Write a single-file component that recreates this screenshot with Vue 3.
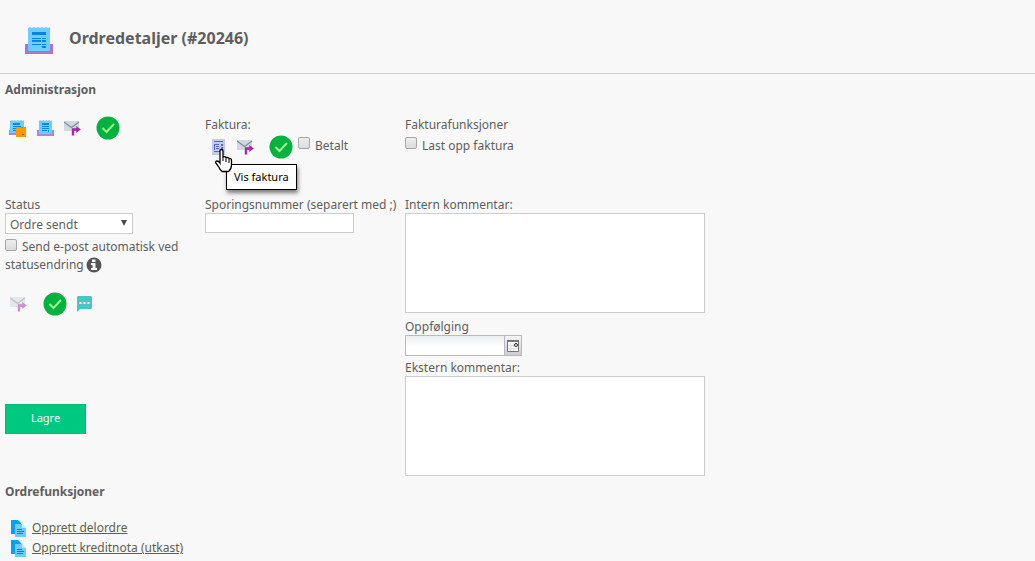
<script setup>
import { ref } from 'vue'

const status = ref('Ordre sendt')
const paid = ref(false)
const upload = ref(false)
const autoMail = ref(false)
const tracking = ref('')
const internal = ref('')
const external = ref('')
const followUp = ref('')
const links = ['Opprett delordre', 'Opprett kreditnota (utkast)']
</script>

<template>
  <svg class="sprite" aria-hidden="true">
    <symbol id="receipt" viewBox="0 0 28 28">
      <path d="M0 18h28v10H0z" fill="#a577d2" />
      <path d="M3 18h22v7H3z" fill="#8b5fc0" />
      <path d="M3 2l2-1 2 1 2-1 2 1 2-1 2 1 2-1 2 1 2-1 2 1 2-1v24H3z" fill="#70cbff" />
      <path d="M7 6h14v3H7zM7 12h9v1H7zM7 14h9v2H7zM7 18h9v1H7zM17 12h4v1h-4zM17 14h4v2h-4zM17 18h4v1h-4zM17 20h4v2h-4z" fill="#0883d9" />
    </symbol>
    <symbol id="receipt-small" viewBox="0 0 17 17">
      <path d="M0 10h17v6H0z" fill="#ac87d5" />
      <path d="M2 1l1-1 2 1 1-1 2 1 1-1 2 1 1-1 2 1 1-1v14H2z" fill="#70cbff" />
      <path d="M5 3h7v2H5zM5 6h7v1H5zM5 8h7v1H5zM5 10h5v1H5zM11 10h1v2h-1z" fill="#078be2" />
    </symbol>
    <symbol id="packing" viewBox="0 0 17 17">
      <path d="M0 10h17v5H0z" fill="#ac87d5" />
      <path d="M1 1l2-1 1 1 2-1 1 1 2-1 1 1 2-1 2 1 1-1v13H1z" fill="#70cbff" />
      <path d="M4 3h7v2H4zM4 6h8v1H4zM4 8h4v1H4zM4 10h3v1H4z" fill="#078be2" />
      <path d="M7 7h10v10H7z" fill="#ff9800" />
      <path d="M11 7h3v1h-3z" fill="#ef7d00" />
      <path d="M13 14h2v1h-2z" fill="#a65000" />
    </symbol>
    <symbol id="mail" viewBox="0 0 17 15">
      <path d="M0 0h15v10H0z" fill="#cfd8dc" />
      <path d="M0 1l7.500 5.500L15 1" fill="none" stroke="#78909c" stroke-width="1.200" />
      <path d="M9 14.500V8.500h4" fill="none" stroke="#ab22ad" stroke-width="2.400" />
      <path d="M12.300 5l4.500 3.500-4.500 3.500z" fill="#ab22ad" />
    </symbol>
    <symbol id="check" viewBox="0 0 24 24">
      <circle cx="12" cy="12" r="11.500" fill="#00b341" />
      <path d="M6.500 12l4 4 7.500-8" fill="none" stroke="#a6f58b" stroke-width="2" />
    </symbol>
    <symbol id="invoice" viewBox="0 0 13 16">
      <path d="M0 0h13v16H0z" fill="#c1c9ed" />
      <path d="M2 2h9v1H2zM2 5h5v1H2zM2 6h1v5H2zM4 7h3v1H4zM4 9h3v1H4zM2 12h6v1H2zM9 5h2v2H9zM9 8h2v4H9z" fill="#5967b4" />
    </symbol>
    <symbol id="chat" viewBox="0 0 15 16">
      <path d="M1 0h13l1 1v11l-1 1H3l-3 3V1z" fill="#43c9c1" />
      <path d="M2.500 6h2v2h-2zM6.500 6h2v2h-2zM10.500 6h2v2h-2z" fill="#fff" />
    </symbol>
    <symbol id="info" viewBox="0 0 16 16">
      <circle cx="8" cy="8" r="7.500" fill="#555" />
      <path d="M6 2.500h3.500v2.500H6zM5 6h4.500v5H11v2H5v-2h1.500V8H5z" fill="#f7f7f7" />
    </symbol>
    <symbol id="copy" viewBox="0 0 15 17">
      <path d="M0 0h7l3 3v11H0z" fill="#00a2f7" />
      <path d="M4 4h7l4 4v9H4z" fill="#70cbff" />
      <path d="M11 4l4 4h-4z" fill="#c9ebff" />
      <path d="M6 9h5v1H6zM6 11h7v1H6zM6 13h6v1H6z" fill="#087fd4" />
    </symbol>
    <symbol id="calendar" viewBox="0 0 12 12">
      <path d="M.5 1h11v10.500H.5z" fill="#fff" stroke="#777" />
      <path d="M3.500 3v8M6.500 3v8M1 5.500h10M1 8.500h10" stroke="#ddd" />
      <path d="M0 0h12v2H0z" fill="#777" />
      <circle cx="9" cy="5" r="1.500" fill="#fff" stroke="#222" />
    </symbol>
  </svg>

  <div class="page">
    <header class="top">
      <svg class="logo"><use href="#receipt" /></svg>
      <h1>Ordredetaljer (#20246)</h1>
    </header>
    <main>
      <h2 class="admin">Administrasjon</h2>
      <div class="grid documents">
        <div class="icons order-icons">
          <button class="icon" aria-label="Pakkseddel"><svg class="i17"><use href="#packing" /></svg></button>
          <button class="icon second" aria-label="Ordre"><svg class="i17"><use href="#receipt-small" /></svg></button>
          <button class="icon third" aria-label="Send ordre"><svg class="mail"><use href="#mail" /></svg></button>
          <svg class="check"><use href="#check" /></svg>
        </div>
        <section>
          <div class="label">Faktura:</div>
          <div class="icons invoice-icons">
            <button class="icon hovered" aria-label="Vis faktura">
              <svg class="invoice"><use href="#invoice" /></svg>
              <svg class="cursor" viewBox="0 0 18 24">
                <path d="M5 1.500Q5 .5 6.500 .5T8 2v6q2-1 3 .5 2-.5 3 1 2.500-.5 2.500 2V16q0 4-3 6.500H7Q5 21 3.500 17.500L.8 14q-.5-2 1.200-2t3 2z" fill="#fff" stroke="#000" stroke-width="1.300" />
                <path d="M8 8v4M11 9v4M14 10v4" stroke="#000" fill="none" />
              </svg>
              <span class="tooltip" role="tooltip">Vis faktura</span>
            </button>
            <button class="icon mail-button" aria-label="Send faktura"><svg class="mail"><use href="#mail" /></svg></button>
            <svg class="check"><use href="#check" /></svg>
            <label class="tick"><input v-model="paid" type="checkbox">Betalt</label>
          </div>
        </section>
        <section>
          <div class="label upload-title">Fakturafunksjoner</div>
          <label class="tick"><input v-model="upload" type="checkbox">Last opp faktura</label>
        </section>
      </div>

      <div class="grid fields">
        <section>
          <label class="label" for="status">Status</label>
          <div class="select-wrap">
            <select id="status" v-model="status"><option>Ordre sendt</option></select>
            <span class="arrow" aria-hidden="true"></span>
          </div>
          <div class="auto">
            <label><input v-model="autoMail" type="checkbox">Send e-post automatisk ved statusendring</label>
            <svg class="info"><use href="#info" /></svg>
          </div>
          <div class="icons message-icons">
            <button class="icon faded" aria-label="Send e-post"><svg class="mail"><use href="#mail" /></svg></button>
            <svg class="check"><use href="#check" /></svg>
            <button class="icon" aria-label="Send SMS"><svg class="chat"><use href="#chat" /></svg></button>
          </div>
          <button class="save">Lagre</button>
        </section>
        <section>
          <label class="label nowrap" for="tracking">Sporingsnummer (separert med ;)</label>
          <input id="tracking" v-model="tracking" class="tracking" type="text">
        </section>
        <section>
          <label class="label" for="internal">Intern kommentar:</label>
          <textarea id="internal" v-model="internal"></textarea>
          <label class="label follow" for="follow">Oppfølging</label>
          <div class="date">
            <input id="follow" v-model="followUp" type="text">
            <button aria-label="Velg dato"><svg><use href="#calendar" /></svg></button>
          </div>
          <label class="label external" for="external">Ekstern kommentar:</label>
          <textarea id="external" v-model="external"></textarea>
        </section>
      </div>

      <h2 class="functions">Ordrefunksjoner</h2>
      <ul>
        <li v-for="link in links" :key="link">
          <svg class="copy"><use href="#copy" /></svg><a href="#">{{ link }}</a>
        </li>
      </ul>
    </main>
  </div>
</template>

<style>
body {
  margin: 0;
  background: #f8f8f8;
}
</style>

<style scoped>
* {
  box-sizing: border-box;
}
.sprite {
  position: absolute;
  width: 0;
  height: 0;
}
.page {
  color: #5e5e5e;
  font: 12px/18px "Noto Sans", "Open Sans", sans-serif;
}
svg {
  display: block;
  flex: none;
}
button, input, select, textarea {
  font: inherit;
  color: inherit;
}
.top {
  display: flex;
  align-items: center;
  gap: 16px;
  height: 74px;
  padding: 6px 25px 0;
  border-bottom: 1px solid #cfcfcf;
}
.logo {
  width: 28px;
  height: 28px;
}
h1, h2 {
  margin: 0;
  font-weight: bold;
}
h1 {
  padding-bottom: 3px;
  font-size: 16px;
  line-height: 24px;
}
h2 {
  padding-top: 2px;
  font-size: 12px;
  line-height: 16px;
}
main {
  padding: 6px 5px 0;
}
.grid {
  display: grid;
  grid-template-columns: 200px 200px 300px;
}
.documents {
  padding-top: 17px;
  min-height: 97px;
}
.label {
  display: block;
  padding-top: 2px;
  line-height: 16px;
}
.nowrap {
  white-space: nowrap;
}
.icons {
  display: flex;
  align-items: center;
}
.order-icons {
  height: 26px;
  padding-left: 4px;
}
.icon {
  position: relative;
  padding: 0;
  border: 0;
  background: none;
}
.i17 {
  width: 17px;
  height: 17px;
}
.second {
  margin-left: 11px;
}
.third {
  margin-left: 10px;
}
.mail {
  width: 17px;
  height: 15px;
}
.check {
  width: 24px;
  height: 24px;
}
.order-icons .check {
  margin-left: 15px;
}
.invoice-icons {
  padding-left: 7px;
  height: 28px;
}
.invoice {
  width: 13px;
  height: 16px;
}
.mail-button {
  margin-left: 12px;
}
.invoice-icons .check {
  margin: 0 5px 0 15px;
}
.cursor {
  position: absolute;
  top: 10px;
  left: 3px;
  width: 18px;
  height: 24px;
  z-index: 2;
}
.tooltip {
  position: absolute;
  top: 25px;
  left: 14px;
  padding: 3px 7px;
  border: 1px solid #000;
  background: #fff;
  color: #000;
  font-size: 11px;
  line-height: 18px;
  white-space: nowrap;
  box-shadow: 1px 3px 4px rgba(0, 0, 0, .5);
}
.tick {
  display: flex;
  align-items: flex-start;
}
.invoice-icons .tick {
  margin-bottom: 2px;
}
input[type="checkbox"] {
  appearance: none;
  width: 12px;
  height: 12px;
  margin: 0 5px 0 0;
  border: 1px solid #a5a5a5;
  border-radius: 2px;
  background: linear-gradient(#ededed, #dcdcdc);
}
.upload-title {
  margin-bottom: 4px;
}
.select-wrap {
  position: relative;
  width: 128px;
}
select, .tracking, textarea {
  display: block;
  margin: 0;
  border: 1px solid #ccc;
  border-radius: 0;
  background: #fff;
}
select {
  width: 100%;
  height: 21px;
  padding: 2px 4px 0;
  appearance: none;
}
.arrow {
  position: absolute;
  top: 7px;
  right: 6px;
  border: solid transparent;
  border-width: 6px 3px 0;
  border-top-color: #4b4b40;
  pointer-events: none;
}
.auto {
  width: 190px;
  padding-top: 4px;
}
.info {
  display: inline-block;
  width: 16px;
  height: 16px;
  margin-left: 2px;
  vertical-align: -4px;
}
.message-icons {
  margin-top: 18px;
  padding-left: 5px;
  height: 24px;
}
.message-icons .check {
  margin: 0 10px 0 16px;
}
.faded {
  opacity: .5;
}
.chat {
  width: 15px;
  height: 16px;
}
.save {
  width: 81px;
  height: 30px;
  margin-top: 88px;
  padding: 0 0 2px;
  border: 1px solid #00bb76;
  background: #00c880;
  color: #fff;
  font-size: 11px;
}
.tracking {
  width: 149px;
  height: 20px;
}
textarea {
  width: 100%;
  height: 100px;
  resize: none;
}
.follow {
  margin-top: 4px;
}
.date {
  display: flex;
  width: 117px;
  height: 21px;
}
.date input {
  flex: 1;
  min-width: 0;
  border: 1px solid #b8b8c8;
  background: linear-gradient(#edf0f0, #fff 60%);
}
.date button {
  width: 17px;
  padding: 3px 2px;
  border: 1px solid #b8b8c0;
  border-left: 0;
  background: linear-gradient(#f4f4f4, #ccc);
}
.date svg {
  width: 12px;
  height: 12px;
}
.external {
  margin-top: 2px;
}
.functions {
  margin-top: 6px;
}
ul {
  margin: 18px 0 0;
  padding: 0 0 0 6px;
  list-style: none;
}
li {
  display: flex;
  align-items: center;
  gap: 6px;
  height: 20px;
}
.copy {
  width: 15px;
  height: 17px;
}
a {
  color: #5e5e50;
}
</style>
